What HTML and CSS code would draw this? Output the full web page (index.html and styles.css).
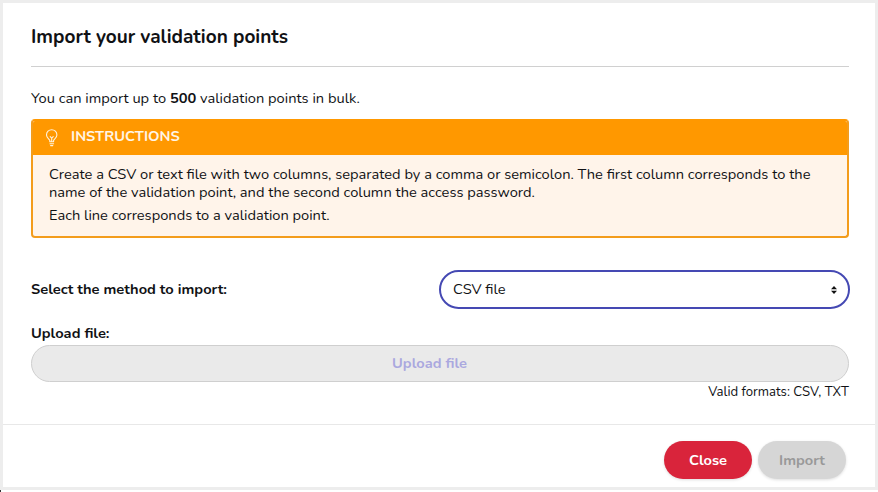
FILE: index.html
```html
<!DOCTYPE html>
<html lang="en">
<head>
<meta charset="utf-8">
<title>Import your validation points</title>
<link rel="stylesheet" href="styles.css">
</head>
<body>
<main class="dialog">
  <div class="content">
    <h1 class="title">Import your validation points</h1>
    <p class="intro">You can import up to <b>500</b> validation points in bulk.</p>
    <section class="notice">
      <header class="notice-head">
        <svg class="bulb" viewBox="0 0 14 18" fill="none" stroke="#fff2dc" stroke-width="1.1" stroke-linecap="round" stroke-linejoin="round">
          <path d="M4.8 12.8V11.6C4.8 10.5 1.5 9 1.5 5.9a5.2 5.2 0 0 1 10.4 0c0 3.1-3.3 4.6-3.3 5.7v1.2zM5 14.8h3.6M5.6 16.6h2.2M6.7 12.4V9M5.2 7.6l1.5 1.6 1.5-1.6"/>
        </svg>
        <span>INSTRUCTIONS</span>
      </header>
      <div class="notice-body">
        <p>Create a CSV or text file with two columns, separated by a comma or semicolon. The first column corresponds to the<br>name of the validation point, and the second column the access password.</p>
        <p class="last">Each line corresponds to a validation point.</p>
      </div>
    </section>
    <div class="method">
      <label class="label">Select the method to import:</label>
      <div class="select"><span>CSV file</span>
        <svg class="arrows" viewBox="0 0 6 8"><path d="M3 0 6 3.2H0zM3 8 0 4.8h6z" fill="#111"/></svg>
      </div>
    </div>
    <div class="label upload-label">Upload file:</div>
    <button class="upload" disabled>Upload file</button>
    <p class="formats">Valid formats: CSV, TXT</p>
  </div>
  <footer class="footer">
    <button class="btn close">Close</button>
    <button class="btn import" disabled>Import</button>
  </footer>
</main>
<div class="edge"></div>
</body>
</html>
```

FILE: styles.css
```css
* { box-sizing: border-box; }
body {
  margin: 0;
  height: 492px;
  overflow: hidden;
  background: #fff;
  color: #101114;
  font: 14.65px/18px Nunito, Lato, sans-serif;
}
h1, p { margin: 0; }
button { font: inherit; }
.dialog { height: 490px; border: 3px solid #ededed; background: #fff; display: flex; flex-direction: column; }
.edge { width: 1px; height: 2px; background: #333; }
.content { height: 421px; padding: 0 26px 0 28px; }
.title { height: 64px; padding-top: 21px; border-bottom: 1px solid #d0d0d0; font-size: 19.05px; line-height: 26px; font-weight: 700; }
.intro { margin-top: 22px; height: 30px; }
.notice { height: 119px; border: 2px solid #f39c1c; border-top-color: #ff9800; border-radius: 4px; background: #fff4ea; overflow: hidden; }
.notice-head { height: 34px; background: #ff9800; color: #fff5e6; display: flex; align-items: center; padding: 0 0 4px 12px; gap: 12px; font-weight: 700; }
.notice-head span { margin-top: -1px; }
.bulb { width: 14px; height: 18px; margin-top: 3px; }
.notice-body { padding: 10px 16px 0; white-space: nowrap; }
.last { margin-top: 5px; }
.method { display: flex; justify-content: space-between; align-items: center; height: 39px; margin: 32px -1px 0 0; }
.method .label, .select span { margin-top: -1px; }
.select { width: 411px; height: 39px; border: 2px solid #4549b3; border-radius: 20px; display: flex; align-items: center; justify-content: space-between; padding: 0 11px 0 12px; }
.arrows { width: 6px; height: 8px; }
.label { font-weight: 700; }
.upload-label { margin-top: 15px; height: 21px; }
.upload { display: block; width: 100%; height: 37px; padding: 0 21px 2px 0; border: 1px solid #cfcfcf; border-radius: 19px; background: #eaeaea; color: #aaa8df; font-weight: 700; }
.formats { font-size: 13.15px; text-align: right; margin-top: 1px; }
.footer { height: 63px; border-top: 1px solid #e8e8e8; display: flex; justify-content: flex-end; gap: 6px; padding: 16px 29px 0 0; }
.btn { width: 88px; height: 38px; padding: 0; border: 0; border-radius: 19px; font-weight: 700; box-shadow: 0 1px 3px #0002; }
.close { background: #d9243b; color: #fff; }
.import { background: #d6d6d6; color: #999; }
```
